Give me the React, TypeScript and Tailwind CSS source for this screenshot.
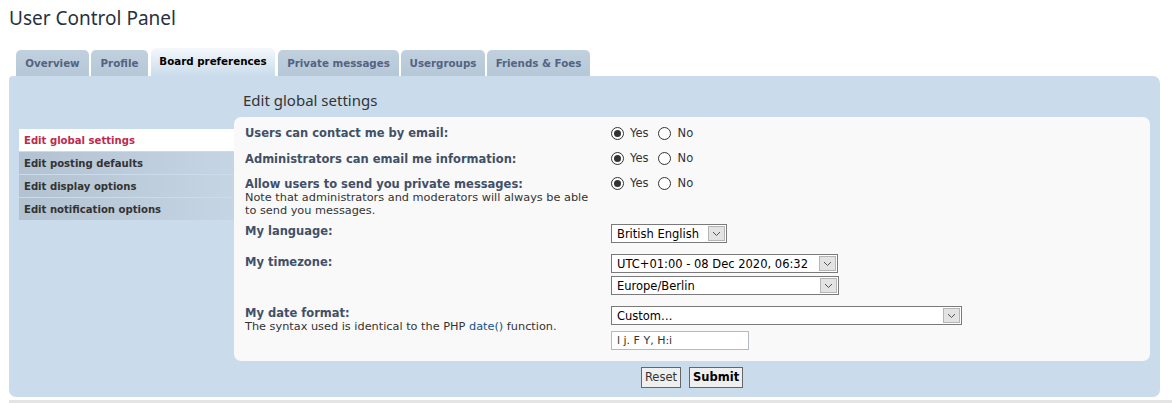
import React from "react";

const Chevron = () => (
  <svg width="9" height="6" viewBox="0 0 9 6" className="block">
    <path d="M1 1 L4.5 4.5 L8 1" fill="none" stroke="#555" strokeWidth="1" />
  </svg>
);

const Select = ({ text, w }: { text: string; w: string }) => (
  <div className={`${w} h-[19px] border border-[#7a7a7a] bg-white flex items-stretch`}>
    <div className="flex-1 pl-[5px] text-[11.5px] leading-[19px] text-black whitespace-nowrap overflow-hidden">{text}</div>
    <div className="w-[17px] my-[1px] mr-[1px] bg-[#e3e3e3] border border-[#b5b5b5] flex items-center justify-center">
      <Chevron />
    </div>
  </div>
);

const Radio = ({ checked }: { checked?: boolean }) => (
  <span className="w-[13px] h-[13px] rounded-full border border-[#333] bg-white flex items-center justify-center">
    {checked && <span className="w-[7px] h-[7px] rounded-full bg-[#333]" />}
  </span>
);

const YesNo = () => (
  <div className="flex items-center h-[14px] text-[11.5px] leading-[14px] text-[#333]">
    <Radio checked />
    <span className="ml-[6px]">Yes</span>
    <span className="ml-[9px]"><Radio /></span>
    <span className="ml-[7px]">No</span>
  </div>
);

const Label = ({ children }: { children: React.ReactNode }) => (
  <div className="text-[11.5px] font-bold text-[#425067] leading-[13px]">{children}</div>
);

const Note = ({ children }: { children: React.ReactNode }) => (
  <div className="text-[11.3px] text-[#333] leading-[13px]">{children}</div>
);

export default function App() {
  const tabs = [
    { t: "Overview", w: "w-[73px]" },
    { t: "Profile", w: "w-[57px]" },
    { t: "Board preferences", w: "w-[124px]", active: true },
    { t: "Private messages", w: "w-[121px]" },
    { t: "Usergroups", w: "w-[84px]" },
    { t: "Friends & Foes", w: "w-[103px]" },
  ];
  const menu = [
    "Edit global settings",
    "Edit posting defaults",
    "Edit display options",
    "Edit notification options",
  ];
  return (
    <div className="w-[1172px] h-[403px] bg-white overflow-hidden font-['DejaVu_Sans',sans-serif] relative">
      <h2 className="pl-[9px] pt-[5px] h-[48px] text-[19px] leading-[26px] text-[#28313f] font-['Noto_Sans',sans-serif]">
        User Control Panel
      </h2>
      <div className="flex items-end h-[28px] pl-[16px] gap-[2px]">
        {tabs.map((tb) =>
          tb.active ? (
            <div
              key={tb.t}
              className={`${tb.w} h-[28px] mx-[1px] rounded-t-[5px] bg-gradient-to-b from-[#f4f8fb] to-[#cadceb] text-[10.3px] font-bold text-black flex justify-center pt-[7px] leading-[13px]`}
            >
              {tb.t}
            </div>
          ) : (
            <div
              key={tb.t}
              className={`${tb.w} h-[26px] rounded-t-[5px] bg-gradient-to-b from-[#c0d0de] to-[#b6c7d7] text-[10.3px] font-bold text-[#536482] flex justify-center pt-[7px] leading-[13px]`}
            >
              {tb.t}
            </div>
          )
        )}
      </div>
      <div className="ml-[9px] w-[1151px] h-[321px] bg-[#cadceb] rounded-b-[7px] rounded-tr-[7px] rounded-tl-[4px] flex pl-[10px] pr-[10px]">
        <div className="w-[215px] pt-[53px] flex flex-col gap-[1px]">
          {menu.map((m, i) =>
            i === 0 ? (
              <div key={m} className="h-[22px] bg-white pl-[5px] text-[10.1px] font-bold text-[#bc2a4d] leading-[23px]">
                {m}
              </div>
            ) : (
              <div
                key={m}
                className="h-[22px] bg-gradient-to-r from-[#b2c2d1] to-[#c5d5e4] pl-[5px] text-[10.1px] font-bold text-[#333] leading-[23px]"
              >
                {m}
              </div>
            )
          )}
        </div>
        <div className="flex-1 flex flex-col">
          <div className="h-[41px] pl-[9px] pt-[14px] text-[15px] leading-[20px] text-[#333] font-['Noto_Sans',sans-serif]">
            Edit global settings
          </div>
          <div className="h-[244px] bg-[#f9f9f9] rounded-[7px] pl-[11px] pt-[9px]">
            <div className="flex h-[25px] items-start">
              <div className="w-[366px] pt-[1px]"><Label>Users can contact me by email:</Label></div>
              <YesNo />
            </div>
            <div className="flex h-[25px] items-start">
              <div className="w-[366px] pt-[2px]"><Label>Administrators can email me information:</Label></div>
              <YesNo />
            </div>
            <div className="flex h-[47px] items-start">
              <div className="w-[366px] pt-[2px]">
                <Label>Allow users to send you private messages:</Label>
                <Note>Note that administrators and moderators will always be able</Note>
                <Note>to send you messages.</Note>
              </div>
              <YesNo />
            </div>
            <div className="flex h-[30px] items-start">
              <div className="w-[366px] pt-[2px]"><Label>My language:</Label></div>
              <div className="pt-[1px]"><Select text="British English" w="w-[116px]" /></div>
            </div>
            <div className="flex h-[52px] items-start">
              <div className="w-[366px] pt-[3px]"><Label>My timezone:</Label></div>
              <div className="pt-[1px] flex flex-col gap-[3px]">
                <Select text="UTC+01:00 - 08 Dec 2020, 06:32" w="w-[227px]" />
                <Select text="Europe/Berlin" w="w-[228px]" />
              </div>
            </div>
            <div className="flex items-start">
              <div className="w-[366px] pt-[2px]">
                <Label>My date format:</Label>
                <Note>
                  The syntax used is identical to the PHP <span className="text-[#105289]">date()</span> function.
                </Note>
              </div>
              <div className="pt-[1px] flex flex-col gap-[6px]">
                <Select text="Custom…" w="w-[351px]" />
                <div className="w-[138px] h-[19px] border border-[#b4bac0] bg-white pl-[5px] text-[11px] leading-[17px] text-[#333]">
                  l j. F Y, H:i
                </div>
              </div>
            </div>
          </div>
          <div className="flex justify-center gap-[8px] pt-[6px]">
            <div className="h-[21px] px-[3px] border border-[#666] bg-[#efefef] text-[11.5px] leading-[19px] text-[#333]">Reset</div>
            <div className="h-[21px] px-[3px] border border-[#666] bg-[#efefef] text-[11.5px] leading-[19px] font-bold text-black">Submit</div>
          </div>
        </div>
      </div>
      <div className="absolute left-[9px] right-0 top-[400px] h-[3px] bg-[#e4e4e4]" />
    </div>
  );
}
